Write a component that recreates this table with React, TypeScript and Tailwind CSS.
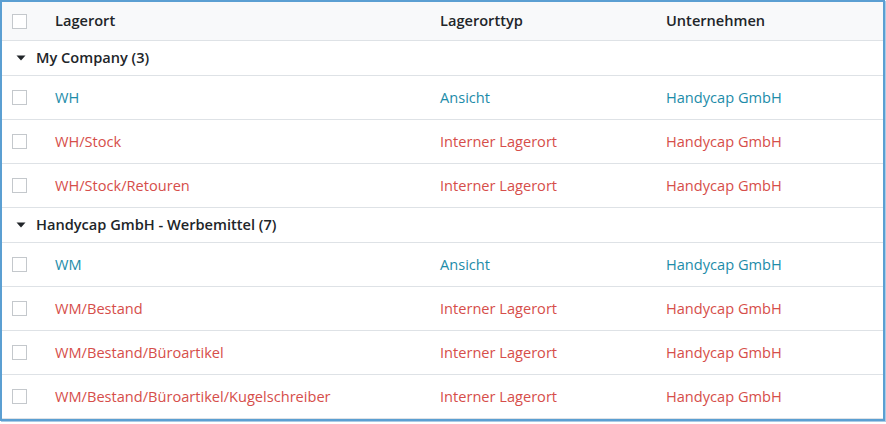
const groups = [
  {
    name: "My Company (3)",
    rows: [
      { loc: "WH", type: "Ansicht", view: true },
      { loc: "WH/Stock", type: "Interner Lagerort", view: false },
      { loc: "WH/Stock/Retouren", type: "Interner Lagerort", view: false },
    ],
  },
  {
    name: "Handycap GmbH - Werbemittel (7)",
    rows: [
      { loc: "WM", type: "Ansicht", view: true },
      { loc: "WM/Bestand", type: "Interner Lagerort", view: false },
      { loc: "WM/Bestand/Büroartikel", type: "Interner Lagerort", view: false },
      {
        loc: "WM/Bestand/Büroartikel/Kugelschreiber",
        type: "Interner Lagerort",
        view: false,
      },
    ],
  },
];

const Box = () => (
  <span className="block h-[15px] w-[15px] border border-[#c4c8cc] bg-white" />
);

const App = () => {
  return (
    <div className="h-[424px] w-[886px] bg-white font-['Open_Sans',sans-serif] text-[14.6px]">
      <div className="h-[421px] w-[885px] overflow-hidden border-2 border-[#5b9fd2] shadow-[1px_1px_0_#a9cbe6]">
        <div className="flex h-[39px] items-center border-b border-[#dee2e6] bg-[#f8f9fa] font-semibold text-[#212529]">
          <div className="w-[53px] pl-[10px]">
            <Box />
          </div>
          <div className="w-[385px]">Lagerort</div>
          <div className="w-[226px]">Lagerorttyp</div>
          <div>Unternehmen</div>
        </div>
        {groups.map((g) => (
          <div key={g.name}>
            <div className="flex h-[35px] items-center border-b border-[#dee2e6] pl-[14px] font-semibold text-[#212529]">
              <svg width="10" height="6" viewBox="0 0 10 6" className="mr-[10px]">
                <path d="M0.5 0.5 L9.5 0.5 L5 5.5 Z" fill="#212529" />
              </svg>
              {g.name}
            </div>
            {g.rows.map((r) => {
              const color = r.view ? "text-[#1d8ca9]" : "text-[#d64e4a]";
              return (
                <div
                  key={r.loc}
                  className={`flex h-[44px] items-center border-b border-[#dee2e6] ${color}`}
                >
                  <div className="w-[53px] pl-[10px]">
                    <Box />
                  </div>
                  <div className="w-[385px]">{r.loc}</div>
                  <div className="w-[226px]">{r.type}</div>
                  <div>Handycap GmbH</div>
                </div>
              );
            })}
          </div>
        ))}
      </div>
    </div>
  );
};

export default App;
